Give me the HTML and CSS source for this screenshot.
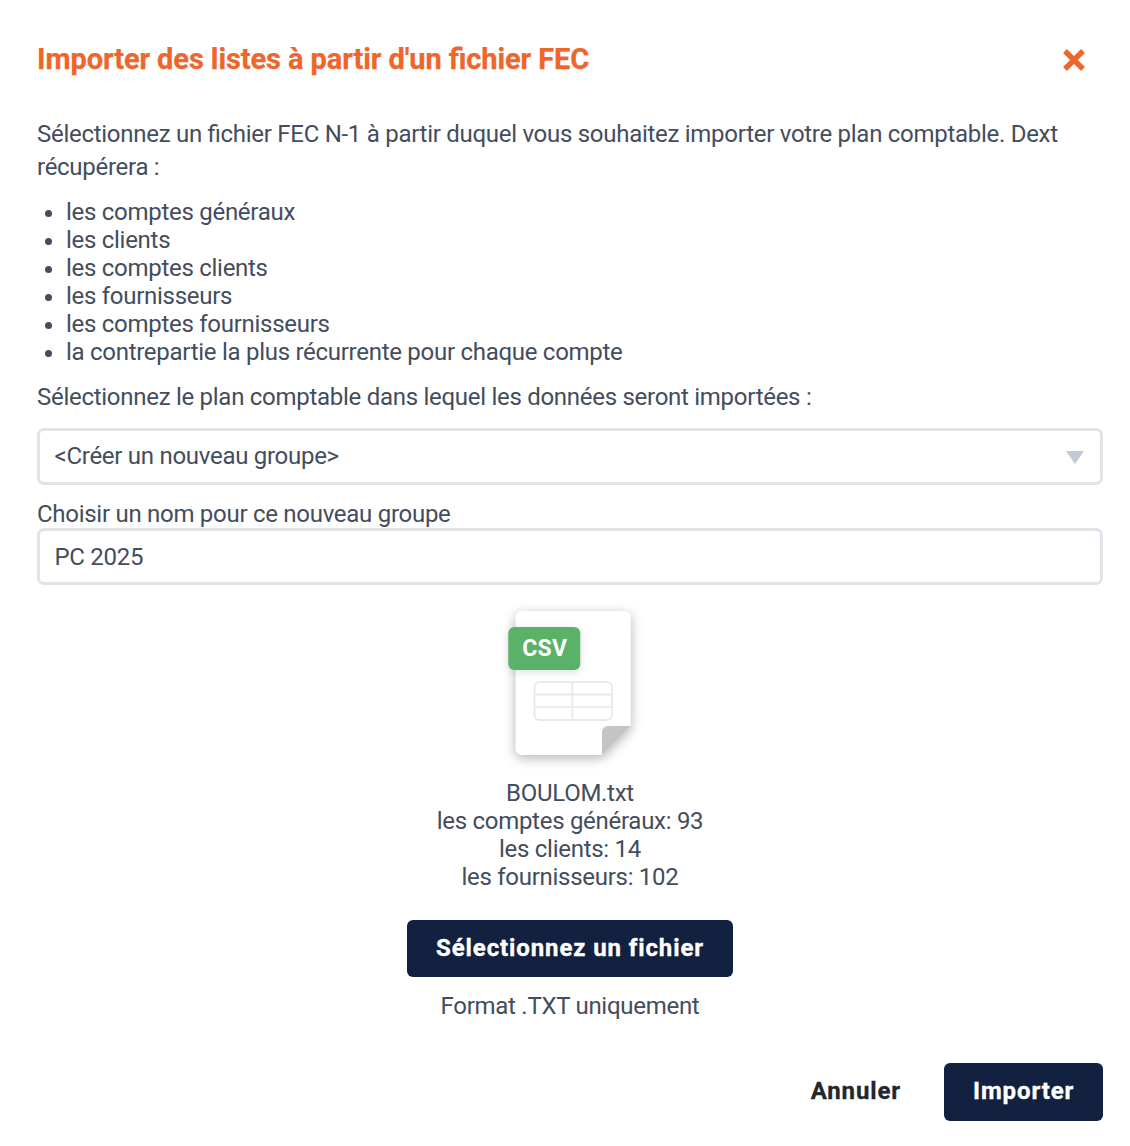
FILE: index.html
```html
<!DOCTYPE html>
<html lang="fr">
<head>
<meta charset="utf-8">
<title>Importer des listes</title>
<link rel="stylesheet" href="styles.css">
</head>
<body>
<main class="dialog">
  <header class="dialog-header">
    <h1 class="title"><span>Importer des listes à partir d'un fichier FEC</span></h1>
    <button class="close" aria-label="Fermer"><svg width="24" height="24" viewBox="0 0 24 24"><path d="M3 3 21 21M21 3 3 21" stroke="#ee662b" stroke-width="5.4" fill="none"/></svg></button>
  </header>
  <p class="intro"><span>Sélectionnez un fichier FEC N-1 à partir duquel vous souhaitez importer votre plan comptable. Dext</span><br><span>récupérera :</span></p>
  <ul class="items">
    <li><span>les comptes généraux</span></li>
    <li><span>les clients</span></li>
    <li><span>les comptes clients</span></li>
    <li><span>les fournisseurs</span></li>
    <li><span>les comptes fournisseurs</span></li>
    <li><span>la contrepartie la plus récurrente pour chaque compte</span></li>
  </ul>
  <p class="select-label"><span>Sélectionnez le plan comptable dans lequel les données seront importées :</span></p>
  <div class="field select"><span>&lt;Créer un nouveau groupe&gt;</span><svg class="arrow" width="18" height="13" viewBox="0 0 18 13"><path d="M0 0H18L9 13Z" fill="#c2c9d4"/></svg></div>
  <p class="name-label"><span>Choisir un nom pour ce nouveau groupe</span></p>
  <div class="field"><span>PC 2025</span></div>
  <section class="file">
    <svg class="file-icon" width="160" height="180" viewBox="490 595 160 180">
      <path class="sheet" d="M521.500 611H624.800a6 6 0 0 1 6 6V726L602 755H521.500a6 6 0 0 1-6-6V617a6 6 0 0 1 6-6Z" fill="#fff"/>
      <path d="M630.800 726 602 755V732a6 6 0 0 1 6-6Z" fill="#c4c4c4"/>
      <rect x="534.500" y="682" width="77.500" height="38" rx="5" fill="none" stroke="#e9e9e9" stroke-width="1.800"/>
      <path d="M534.500 694.500H612M534.500 707.200H612M572.300 682V720" stroke="#e9e9e9" stroke-width="1.800"/>
      <rect class="badge" x="508.300" y="627" width="72" height="43" rx="6" fill="#5ab168"/>
      <text class="badge-text" x="544.700" y="656" text-anchor="middle">CSV</text>
    </svg>
    <div class="summary"><span>BOULOM.txt</span><br><span>les comptes généraux: 93</span><br><span>les clients: 14</span><br><span>les fournisseurs: 102</span></div>
    <button class="button choose"><span>Sélectionnez un fichier</span></button>
    <p class="hint"><span>Format .TXT uniquement</span></p>
  </section>
  <footer class="actions">
    <button class="cancel"><span>Annuler</span></button>
    <button class="button submit"><span>Importer</span></button>
  </footer>
</main>
</body>
</html>
```
FILE: styles.css
```css
* { box-sizing: border-box; }
body { margin: 0; background: #fff; color: #434d5d; font: 24px/28px Roboto, sans-serif; letter-spacing: -0.28px; font-feature-settings: "liga" 1; }
p, h1, ul { margin: 0; padding: 0; }
button { border: 0; background: none; padding: 0; font: inherit; font-feature-settings: normal; }
.dialog { height: 1146px; padding: 36px 27px 25px 37px; display: flex; flex-direction: column; }
.dialog-header { display: flex; justify-content: space-between; height: 48px; align-items: center; padding-right: 17px; }
.title { font-size: 29px; font-weight: 700; letter-spacing: -0.09px; color: #ee662b; padding-bottom: 2px; -webkit-text-stroke: 0.25px; }
.close, .close svg { display: block; }
.intro { margin-top: 34px; line-height: 33px; }
.items { margin-top: 14px; padding-left: 29px; }
.select-label { margin-top: 17px; }
.field { height: 57px; border: 3px solid #e0e4e9; border-radius: 7px; display: flex; align-items: center; justify-content: space-between; padding: 0 16px 0 14.5px; flex: none; }
.select { margin-top: 17px; padding-bottom: 2px; }
.arrow { margin-top: 4px; }
.name-label { margin-top: 15px; }
.file { display: flex; flex-direction: column; align-items: center; text-align: center; }
.file-icon { margin-top: 10px; }
.sheet { filter: drop-shadow(0 3px 6px rgba(0,0,0,.3)); }
.badge { filter: drop-shadow(0 2px 4px rgba(0,0,0,.12)); }
.badge-text { font: 700 23px Roboto, sans-serif; fill: #fff; letter-spacing: 0.2px; }
.summary { margin-top: 4px; }
.button { height: 57px; padding: 0 29px 2px; border-radius: 6px; background: #12213f; color: #fff; font-weight: 700; letter-spacing: 0.89px; -webkit-text-stroke: 0.35px; }
.choose { width: 326px; margin-top: 29px; white-space: nowrap; }
.hint { margin-top: 15px; }
.actions { display: flex; justify-content: flex-end; align-items: center; gap: 43px; margin-top: auto; }
.submit { width: 159px; height: 58px; }
.cancel { color: #22272f; font-weight: 700; letter-spacing: 0.88px; padding-bottom: 2px; -webkit-text-stroke: 0.3px; }
```
